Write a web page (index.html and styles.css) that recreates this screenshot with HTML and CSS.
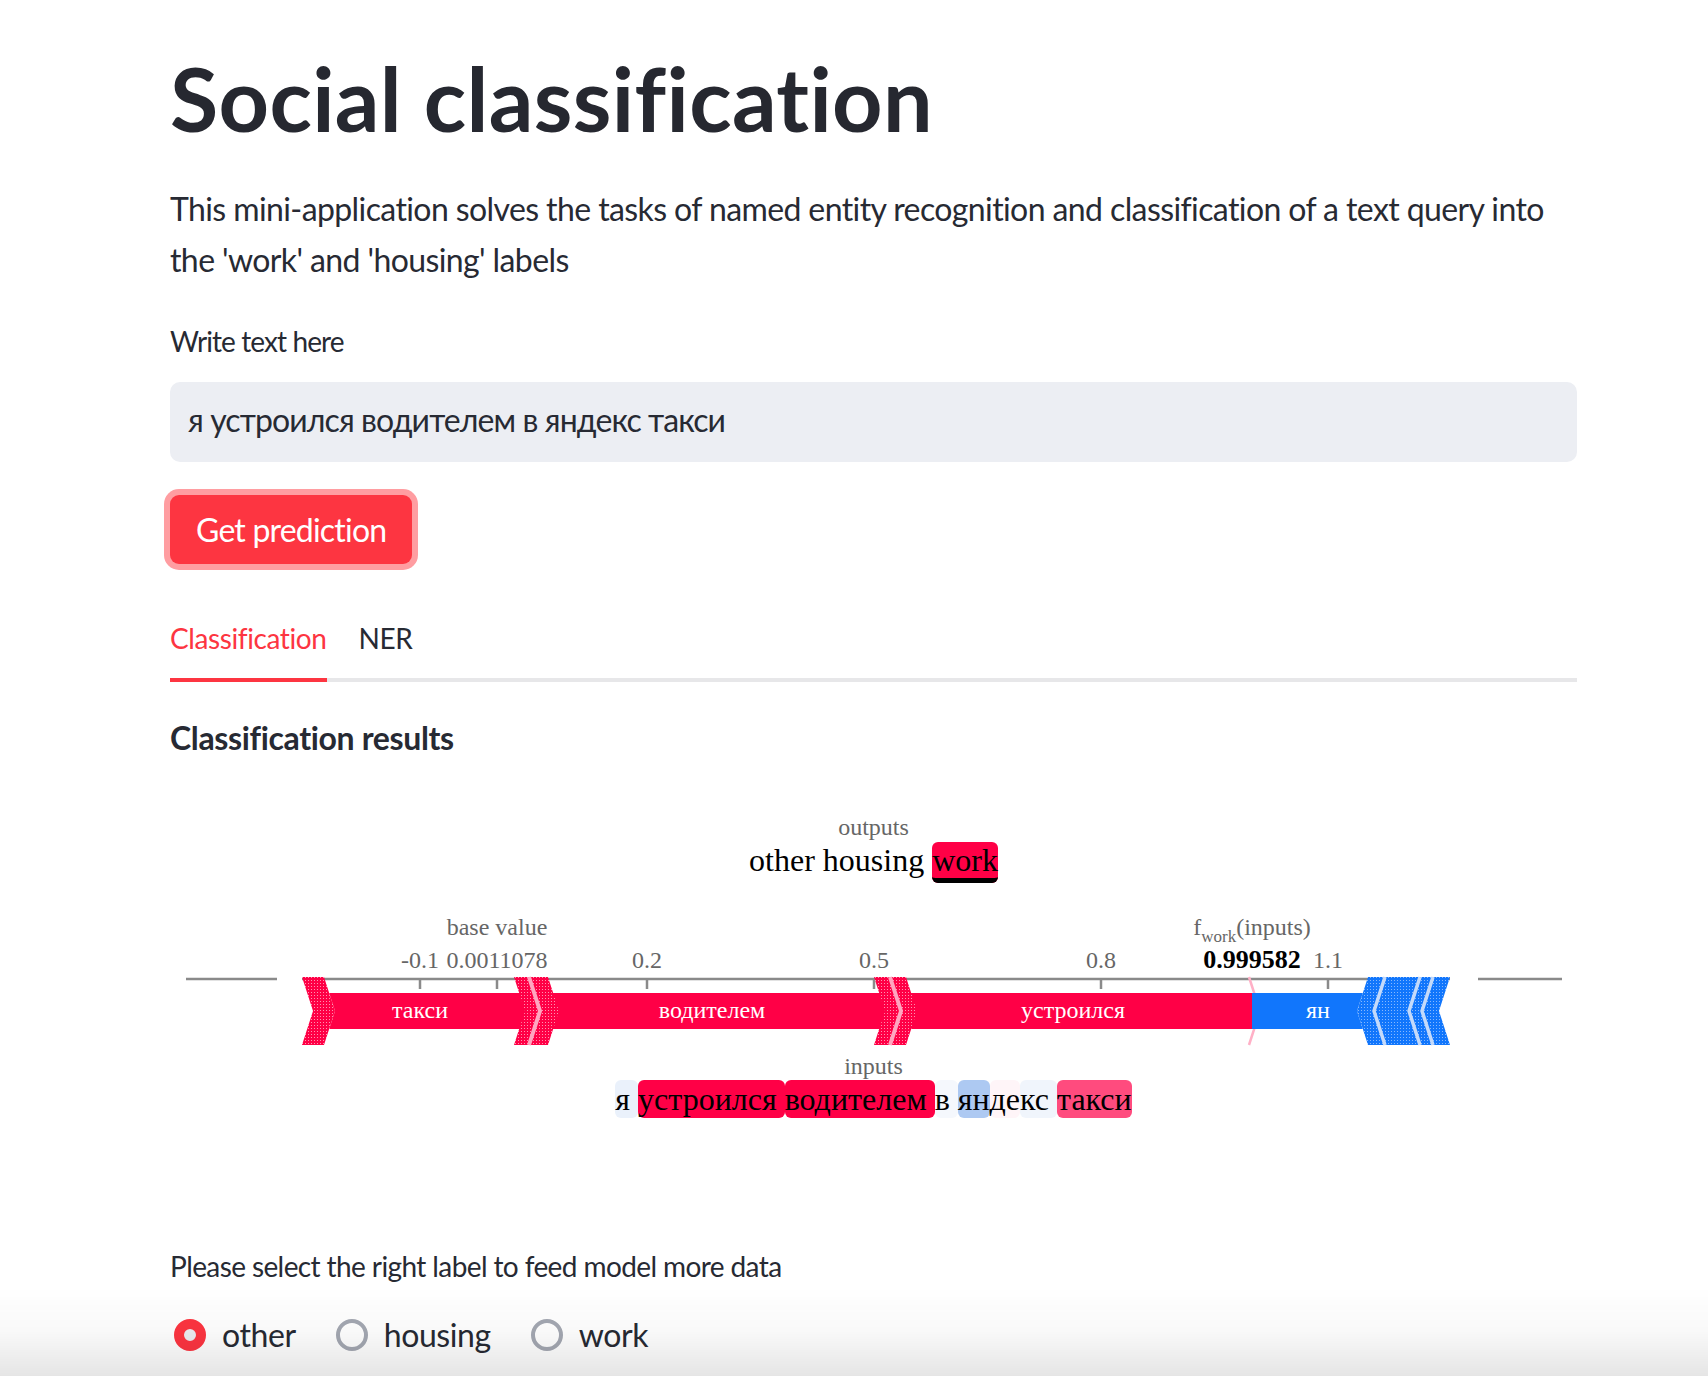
FILE: index.html
```html
<!DOCTYPE html>
<html lang="en">
<head>
<meta charset="utf-8">
<title>Social classification</title>
<link rel="stylesheet" href="styles.css">
</head>
<body>
<main class="page">
  <h1 class="title">Social classification</h1>
  <p class="intro">This mini-application solves the tasks of named entity recognition and classification of a text query into the 'work' and 'housing' labels</p>

  <label class="field-label">Write text here</label>
  <div class="text-input">я устроился водителем в яндекс такси</div>

  <button class="btn-primary" type="button">Get prediction</button>

  <div class="tabs">
    <div class="tab active">Classification</div>
    <div class="tab">NER</div>
  </div>

  <div class="results-title">Classification results</div>

  <section class="shap">
    <div class="shap-label">outputs</div>
    <div class="shap-outputs"><span class="out">other</span> <span class="out">housing</span> <span class="out out-active">work</span></div>

    <svg class="force" width="1407" height="148" viewBox="0 0 1407 148" xmlns="http://www.w3.org/2000/svg">
      <defs>
        <pattern id="hatch-red" width="3" height="3" patternUnits="userSpaceOnUse">
          <rect width="3" height="3" fill="#ff0046"/>
          <rect width="1" height="1" fill="#ff93b1"/>
        </pattern>
        <pattern id="hatch-blue" width="3" height="3" patternUnits="userSpaceOnUse">
          <rect width="3" height="3" fill="#1176fc"/>
          <rect width="1" height="1" fill="#86b8fd"/>
        </pattern>
      </defs>

      <!-- axis -->
      <g stroke="#8a8a8a" stroke-width="2.5">
        <line x1="16" y1="74" x2="107" y2="74"/>
        <line x1="132" y1="74" x2="1280" y2="74"/>
        <line x1="1308" y1="74" x2="1392" y2="74"/>
        <line x1="250" y1="74" x2="250" y2="84"/>
        <line x1="327" y1="74" x2="327" y2="84"/>
        <line x1="477" y1="74" x2="477" y2="84"/>
        <line x1="704" y1="74" x2="704" y2="84"/>
        <line x1="931" y1="74" x2="931" y2="84"/>
        <line x1="1158" y1="74" x2="1158" y2="84"/>
      </g>

      <g class="axis-text" font-family="Liberation Serif, Times New Roman, serif" font-size="24" fill="#666" text-anchor="middle">
        <text x="327" y="30">base value</text>
        <text x="1082" y="30">f<tspan font-size="17" dy="7">work</tspan><tspan dy="-7">(inputs)</tspan></text>
        <text x="250" y="63">-0.1</text>
        <text x="327" y="63">0.0011078</text>
        <text x="477" y="63">0.2</text>
        <text x="704" y="63">0.5</text>
        <text x="931" y="63">0.8</text>
        <text x="1082" y="63" fill="#000" font-weight="bold" font-size="26">0.999582</text>
        <text x="1158" y="63">1.1</text>
      </g>

      <!-- f(x) marker -->
      <polyline points="1079,72 1090,106 1079,140" fill="none" stroke="#ffb0c6" stroke-width="2.5"/>

      <!-- bars -->
      <polygon points="159.2,88 1082,88 1082,124 159.2,124 165,106" fill="#ff0046"/>
      <polygon points="1082,88 1192.8,88 1187,106 1192.8,124 1082,124" fill="#1176fc"/>

      <!-- red chevron bands -->
      <polygon points="132,72 154,72 165,106 154,140 132,140 143,106" fill="url(#hatch-red)"/>
      <polygon points="344,72 378,72 389,106 378,140 344,140 355,106" fill="url(#hatch-red)"/>
      <polygon points="704,72 736,72 747,106 736,140 704,140 715,106" fill="url(#hatch-red)"/>
      <g fill="none" stroke="#ffa6c0" stroke-width="4">
        <polyline points="359,72 370,106 359,140"/>
        <polyline points="720,72 731,106 720,140"/>
      </g>

      <!-- blue chevron band -->
      <polygon points="1198,72 1280,72 1269,106 1280,140 1198,140 1187,106" fill="url(#hatch-blue)"/>
      <g fill="none" stroke="#c4dafa" stroke-width="3.5">
        <polyline points="1215,72 1204,106 1215,140"/>
        <polyline points="1250,72 1239,106 1250,140"/>
        <polyline points="1263,72 1252,106 1263,140"/>
      </g>

      <g font-family="Liberation Serif, Times New Roman, serif" font-size="24" fill="#fff" text-anchor="middle">
        <text x="250" y="113">такси</text>
        <text x="542" y="113">водителем</text>
        <text x="903" y="113">устроился</text>
        <text x="1148" y="113">ян</text>
      </g>
    </svg>

    <div class="shap-label shap-label-inputs">inputs</div>
    <div class="tokens"><span class="tok t-ya">я </span><span class="tok t-red">устроился </span><span class="tok t-red">водителем </span><span class="tok t-v">в </span><span class="tok t-yan">ян</span><span class="tok t-de">де</span><span class="tok t-ks">кс </span><span class="tok t-taxi">такси</span></div>
  </section>

  <div class="select-label">Please select the right label to feed model more data</div>
  <div class="radio-group">
    <div class="radio-item"><span class="radio checked"></span><span class="radio-text">other</span></div>
    <div class="radio-item"><span class="radio"></span><span class="radio-text">housing</span></div>
    <div class="radio-item"><span class="radio"></span><span class="radio-text">work</span></div>
  </div>
</main>
<div class="bottom-fade"></div>
</body>
</html>
```

FILE: styles.css
```css
html, body {
  margin: 0;
  padding: 0;
  background: #ffffff;
}

body {
  font-family: "Lato", "Source Sans Pro", "Noto Sans", sans-serif;
  color: #272a33;
  height: 1376px;
  overflow: hidden;
}

.page {
  width: 1407px;
  margin-left: 170px;
  display: flex;
  flex-direction: column;
  align-items: flex-start;
}

.title {
  margin: 46px 0 0 0;
  font-size: 88px;
  line-height: 105.6px;
  font-weight: 700;
  letter-spacing: 0.35px;
  color: #262830;
}

.intro {
  margin: 31px 0 0 0;
  font-size: 32px;
  line-height: 51.2px;
  letter-spacing: -0.6px;
}

.field-label {
  margin-top: 38px;
  font-size: 28px;
  line-height: 36px;
  letter-spacing: -0.9px;
}

.text-input {
  margin-top: 23px;
  align-self: stretch;
  height: 80px;
  box-sizing: border-box;
  background: #eceef3;
  border-radius: 10px;
  padding: 0 18px 4px 18px;
  font-size: 32px;
  line-height: 76px;
  letter-spacing: -0.9px;
  color: #272a33;
}

.btn-primary {
  margin-top: 33px;
  height: 69px;
  padding: 0 26px;
  border: none;
  border-radius: 9px;
  background: #fd3541;
  box-shadow: 0 0 0 6px #ff9da1;
  color: #ffffff;
  font-family: inherit;
  font-size: 32px;
  line-height: 69px;
  letter-spacing: -0.8px;
}

.tabs {
  margin-top: 56px;
  align-self: stretch;
  display: flex;
  gap: 32px;
  box-shadow: inset 0 -4px 0 #e7e7e9;
}

.tab {
  font-size: 28px;
  line-height: 36px;
  letter-spacing: -0.4px;
  padding-bottom: 22px;
  border-bottom: 4px solid transparent;
}

.tab.active {
  color: #fd3541;
  border-bottom-color: #fd3541;
}

.results-title {
  margin-top: 30px;
  font-size: 32px;
  line-height: 51.2px;
  font-weight: 700;
  letter-spacing: -0.35px;
}

/* SHAP text plot */
.shap {
  align-self: stretch;
  margin-top: 51px;
  font-family: "Liberation Serif", "Times New Roman", serif;
  color: #000;
  text-align: center;
}

.shap-label {
  font-size: 24px;
  line-height: 26px;
  color: #666666;
}

.shap-outputs {
  font-size: 32px;
  line-height: 40px;
}

.out-active {
  background: #ff0046;
  border-radius: 6px;
  border-bottom: 5px solid #000;
}

.force {
  display: block;
  margin-top: 25px;
}

.tokens {
  margin-top: 1px;
  font-size: 32px;
  line-height: 38px;
  height: 38px;
}

.tok {
  display: inline-block;
  white-space: pre;
  border-radius: 6px;
  vertical-align: top;
}

.t-ya { background: #eaf1fb; }
.t-red { background: #ff0046; }
.t-v { background: #f5f8fd; }
.t-yan { background: #adc9f2; }
.t-de { background: #fff5f8; }
.t-ks { background: #f0f5fc; }
.t-taxi { background: #ff4b7e; }

.select-label {
  margin-top: 130px;
  font-size: 28px;
  line-height: 36px;
  letter-spacing: -0.6px;
}

.radio-group {
  margin-top: 25px;
  display: flex;
  gap: 40px;
  padding-left: 4px;
}

.radio-item {
  display: flex;
  align-items: center;
  gap: 16px;
  font-size: 32px;
  line-height: 51.2px;
  letter-spacing: -0.4px;
}

.radio {
  width: 32px;
  height: 32px;
  box-sizing: border-box;
  border-radius: 50%;
  border: 4px solid #a4a8b2;
  background: #ffffff;
}

.radio.checked {
  border: 10px solid #fd3541;
  background: #eceef2;
}

.bottom-fade {
  position: fixed;
  left: 0;
  right: 0;
  bottom: 0;
  height: 90px;
  background: linear-gradient(to bottom, rgba(0,0,0,0) 0%, rgba(0,0,0,0.025) 50%, rgba(0,0,0,0.1) 100%);
  pointer-events: none;
}
```
